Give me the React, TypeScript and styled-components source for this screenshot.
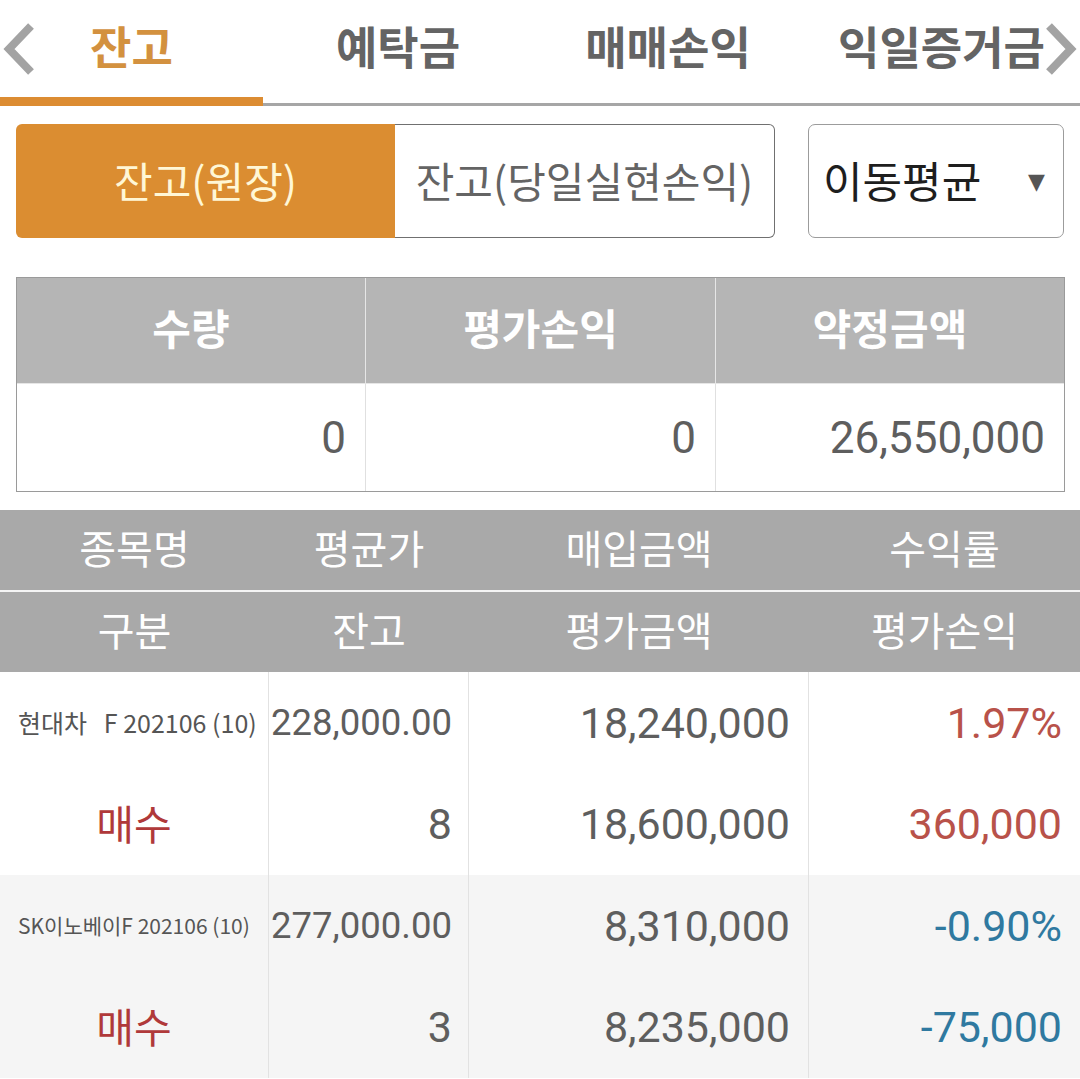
import React from "react";
import styled, { createGlobalStyle } from "styled-components";

const Global = createGlobalStyle`
  html, body { margin: 0; padding: 0; background: #fff; }
  body { font-family: Roboto, "Noto Sans CJK KR", sans-serif; width: 1080px; overflow: hidden; }
  * { box-sizing: border-box; }
`;

const Page = styled.div`
  width: 1080px;
  height: 1079px;
  display: flex;
  flex-direction: column;
  background: #fff;
`;

const TopBar = styled.div`
  position: relative;
  height: 106px;
  border-bottom: 3px solid #a6a6a6;
  display: grid;
  grid-template-columns: 263px 270px 270px 277px;
`;

const Tab = styled.div<{ $active?: boolean }>`
  position: relative;
  display: flex;
  align-items: center;
  justify-content: center;
  padding-bottom: 12px;
  font-family: "Noto Sans CJK KR", sans-serif;
  font-weight: 700;
  font-size: 45px;
  color: ${(p) => (p.$active ? "#d3913f" : "#646464")};
  &::after {
    content: "";
    display: ${(p) => (p.$active ? "block" : "none")};
    position: absolute;
    left: 0;
    right: 0;
    bottom: -3px;
    height: 9px;
    background: #dc8c32;
  }
`;

const Arrow = styled.svg<{ $side: "left" | "right" }>`
  position: absolute;
  top: 22px;
  ${(p) => (p.$side === "left" ? "left: 2px;" : "right: 2px;")}
  width: 34px;
  height: 54px;
`;

const Controls = styled.div`
  display: flex;
  margin: 18px 16px 0 16px;
  height: 114px;
  gap: 33px;
`;

const Segment = styled.div`
  display: flex;
  width: 759px;
  height: 100%;
`;

const SegButton = styled.div<{ $active?: boolean }>`
  flex: 1;
  display: flex;
  align-items: center;
  justify-content: center;
  padding-bottom: 4px;
  font-family: "Noto Sans CJK KR", sans-serif;
  font-size: 42px;
  ${(p) =>
    p.$active
      ? `background: #db8d31; color: #fff7d6; border-radius: 6px 0 0 6px;`
      : `background: #fff; color: #646464; border: 1px solid #707070; border-left: none; border-radius: 0 6px 6px 0;`}
`;

const Dropdown = styled.div`
  flex: 1;
  display: flex;
  align-items: center;
  justify-content: space-between;
  padding: 0 18px 4px 14px;
  border: 1px solid #9c9c9c;
  border-radius: 7px;
  font-family: "Noto Sans CJK KR", sans-serif;
  font-size: 43px;
  color: #1e1e1e;
`;

const Caret = styled.span`
  font-size: 22px;
  color: #555;
  font-family: "DejaVu Sans", sans-serif;
  padding-top: 4px;
`;

const Summary = styled.div`
  margin: 39px 15px 0 16px;
  border: 1px solid #9a9a9a;
  display: grid;
  grid-template-columns: 349px 350px 1fr;
  grid-template-rows: 106px 107px;
`;

const SumHead = styled.div<{ $last?: boolean }>`
  background: #b5b5b5;
  color: #fff;
  display: flex;
  align-items: center;
  justify-content: center;
  font-family: "Noto Sans CJK KR", sans-serif;
  font-weight: 700;
  font-size: 42px;
  padding-bottom: 8px;
  border-right: ${(p) => (p.$last ? "none" : "1px solid #e6e6e6")};
  border-bottom: 1px solid #e6e6e6;
`;

const SumCell = styled.div<{ $last?: boolean }>`
  display: flex;
  align-items: center;
  justify-content: flex-end;
  padding-right: 19px;
  font-size: 44px;
  color: #5e5e5e;
  border-right: ${(p) => (p.$last ? "none" : "1px solid #e0e0e0")};
`;

const Holdings = styled.div`
  margin-top: 18px;
  display: grid;
  grid-template-columns: 269px 200px 340px 1fr;
`;

const HeadRow = styled.div<{ $first?: boolean }>`
  grid-column: 1 / -1;
  display: grid;
  grid-template-columns: subgrid;
  height: ${(p) => (p.$first ? "82px" : "80px")};
  background: #a9a9a9;
  border-bottom: ${(p) => (p.$first ? "2px solid #f4f4f4" : "none")};
`;

const HeadCell = styled.div`
  display: flex;
  align-items: center;
  justify-content: center;
  color: #fff;
  font-family: "Noto Sans CJK KR", sans-serif;
  font-size: 40px;
  padding-bottom: 6px;
`;

const DataRow = styled.div<{ $alt?: boolean }>`
  grid-column: 1 / -1;
  display: grid;
  grid-template-columns: subgrid;
  grid-template-rows: 101px 102px;
  background: ${(p) => (p.$alt ? "#f5f5f5" : "#fff")};
`;

const Cell = styled.div<{ $col: number; $align?: "left" | "right" | "center" }>`
  grid-column: ${(p) => p.$col};
  display: flex;
  align-items: center;
  justify-content: ${(p) =>
    p.$align === "left" ? "flex-start" : p.$align === "center" ? "center" : "flex-end"};
  padding: ${(p) =>
    p.$align === "left" ? "0 0 0 18px" : p.$align === "center" ? "0" : p.$col === 2 ? "0 16px 0 0" : "0 18px 0 0"};
  border-right: ${(p) => (p.$col < 4 ? "1px solid #e2e2e2" : "none")};
  white-space: nowrap;
  overflow: hidden;
`;

const Name = styled.span<{ $size: number }>`
  font-family: "Noto Sans CJK KR", sans-serif;
  font-size: ${(p) => p.$size}px;
  color: #555;
  white-space: pre;
  padding-bottom: 2px;
`;

const Side = styled.span`
  font-family: "Noto Sans CJK KR", sans-serif;
  font-size: 41px;
  color: #b0393a;
  padding-bottom: 4px;
`;

const Num = styled.span<{ $tone?: "up" | "down"; $small?: boolean }>`
  font-family: Roboto, sans-serif;
  font-size: ${(p) => (p.$small ? "36.5px" : "43px")};
  color: ${(p) => (p.$tone === "up" ? "#b8524a" : p.$tone === "down" ? "#2f79a0" : "#5e5e5e")};
`;

type Row = {
  name: string;
  nameSize: number;
  avg: string;
  qty: string;
  buy: string;
  evalAmt: string;
  rate: string;
  pl: string;
  tone: "up" | "down";
};

const rows: Row[] = [
  { name: "현대차   F 202106 (10)", nameSize: 25, avg: "228,000.00", qty: "8", buy: "18,240,000", evalAmt: "18,600,000", rate: "1.97%", pl: "360,000", tone: "up" },
  { name: "SK이노베이F 202106 (10)", nameSize: 21, avg: "277,000.00", qty: "3", buy: "8,310,000", evalAmt: "8,235,000", rate: "-0.90%", pl: "-75,000", tone: "down" },
];

const Chevron = ({ side }: { side: "left" | "right" }) => (
  <Arrow $side={side} viewBox="0 0 34 54">
    <polyline
      points={side === "left" ? "29,4 7,27 29,50" : "5,4 27,27 5,50"}
      fill="none"
      stroke="#a3a3a3"
      strokeWidth="8"
      strokeLinecap="butt"
    />
  </Arrow>
);

export default function App() {
  return (
    <Page>
      <Global />
      <TopBar>
        <Tab $active>잔고</Tab>
        <Tab>예탁금</Tab>
        <Tab>매매손익</Tab>
        <Tab>익일증거금</Tab>
        <Chevron side="left" />
        <Chevron side="right" />
      </TopBar>

      <Controls>
        <Segment>
          <SegButton $active>잔고(원장)</SegButton>
          <SegButton>잔고(당일실현손익)</SegButton>
        </Segment>
        <Dropdown>
          <span>이동평균</span>
          <Caret>▼</Caret>
        </Dropdown>
      </Controls>

      <Summary>
        <SumHead>수량</SumHead>
        <SumHead>평가손익</SumHead>
        <SumHead $last>약정금액</SumHead>
        <SumCell>0</SumCell>
        <SumCell>0</SumCell>
        <SumCell $last>26,550,000</SumCell>
      </Summary>

      <Holdings>
        <HeadRow $first>
          <HeadCell>종목명</HeadCell>
          <HeadCell>평균가</HeadCell>
          <HeadCell>매입금액</HeadCell>
          <HeadCell>수익률</HeadCell>
        </HeadRow>
        <HeadRow>
          <HeadCell>구분</HeadCell>
          <HeadCell>잔고</HeadCell>
          <HeadCell>평가금액</HeadCell>
          <HeadCell>평가손익</HeadCell>
        </HeadRow>
        {rows.map((r, i) => (
          <DataRow key={r.name} $alt={i % 2 === 1}>
            <Cell $col={1} $align="left"><Name $size={r.nameSize}>{r.name}</Name></Cell>
            <Cell $col={2}><Num $small>{r.avg}</Num></Cell>
            <Cell $col={3}><Num>{r.buy}</Num></Cell>
            <Cell $col={4}><Num $tone={r.tone}>{r.rate}</Num></Cell>
            <Cell $col={1} $align="center"><Side>매수</Side></Cell>
            <Cell $col={2}><Num>{r.qty}</Num></Cell>
            <Cell $col={3}><Num>{r.evalAmt}</Num></Cell>
            <Cell $col={4}><Num $tone={r.tone}>{r.pl}</Num></Cell>
          </DataRow>
        ))}
      </Holdings>
    </Page>
  );
}
